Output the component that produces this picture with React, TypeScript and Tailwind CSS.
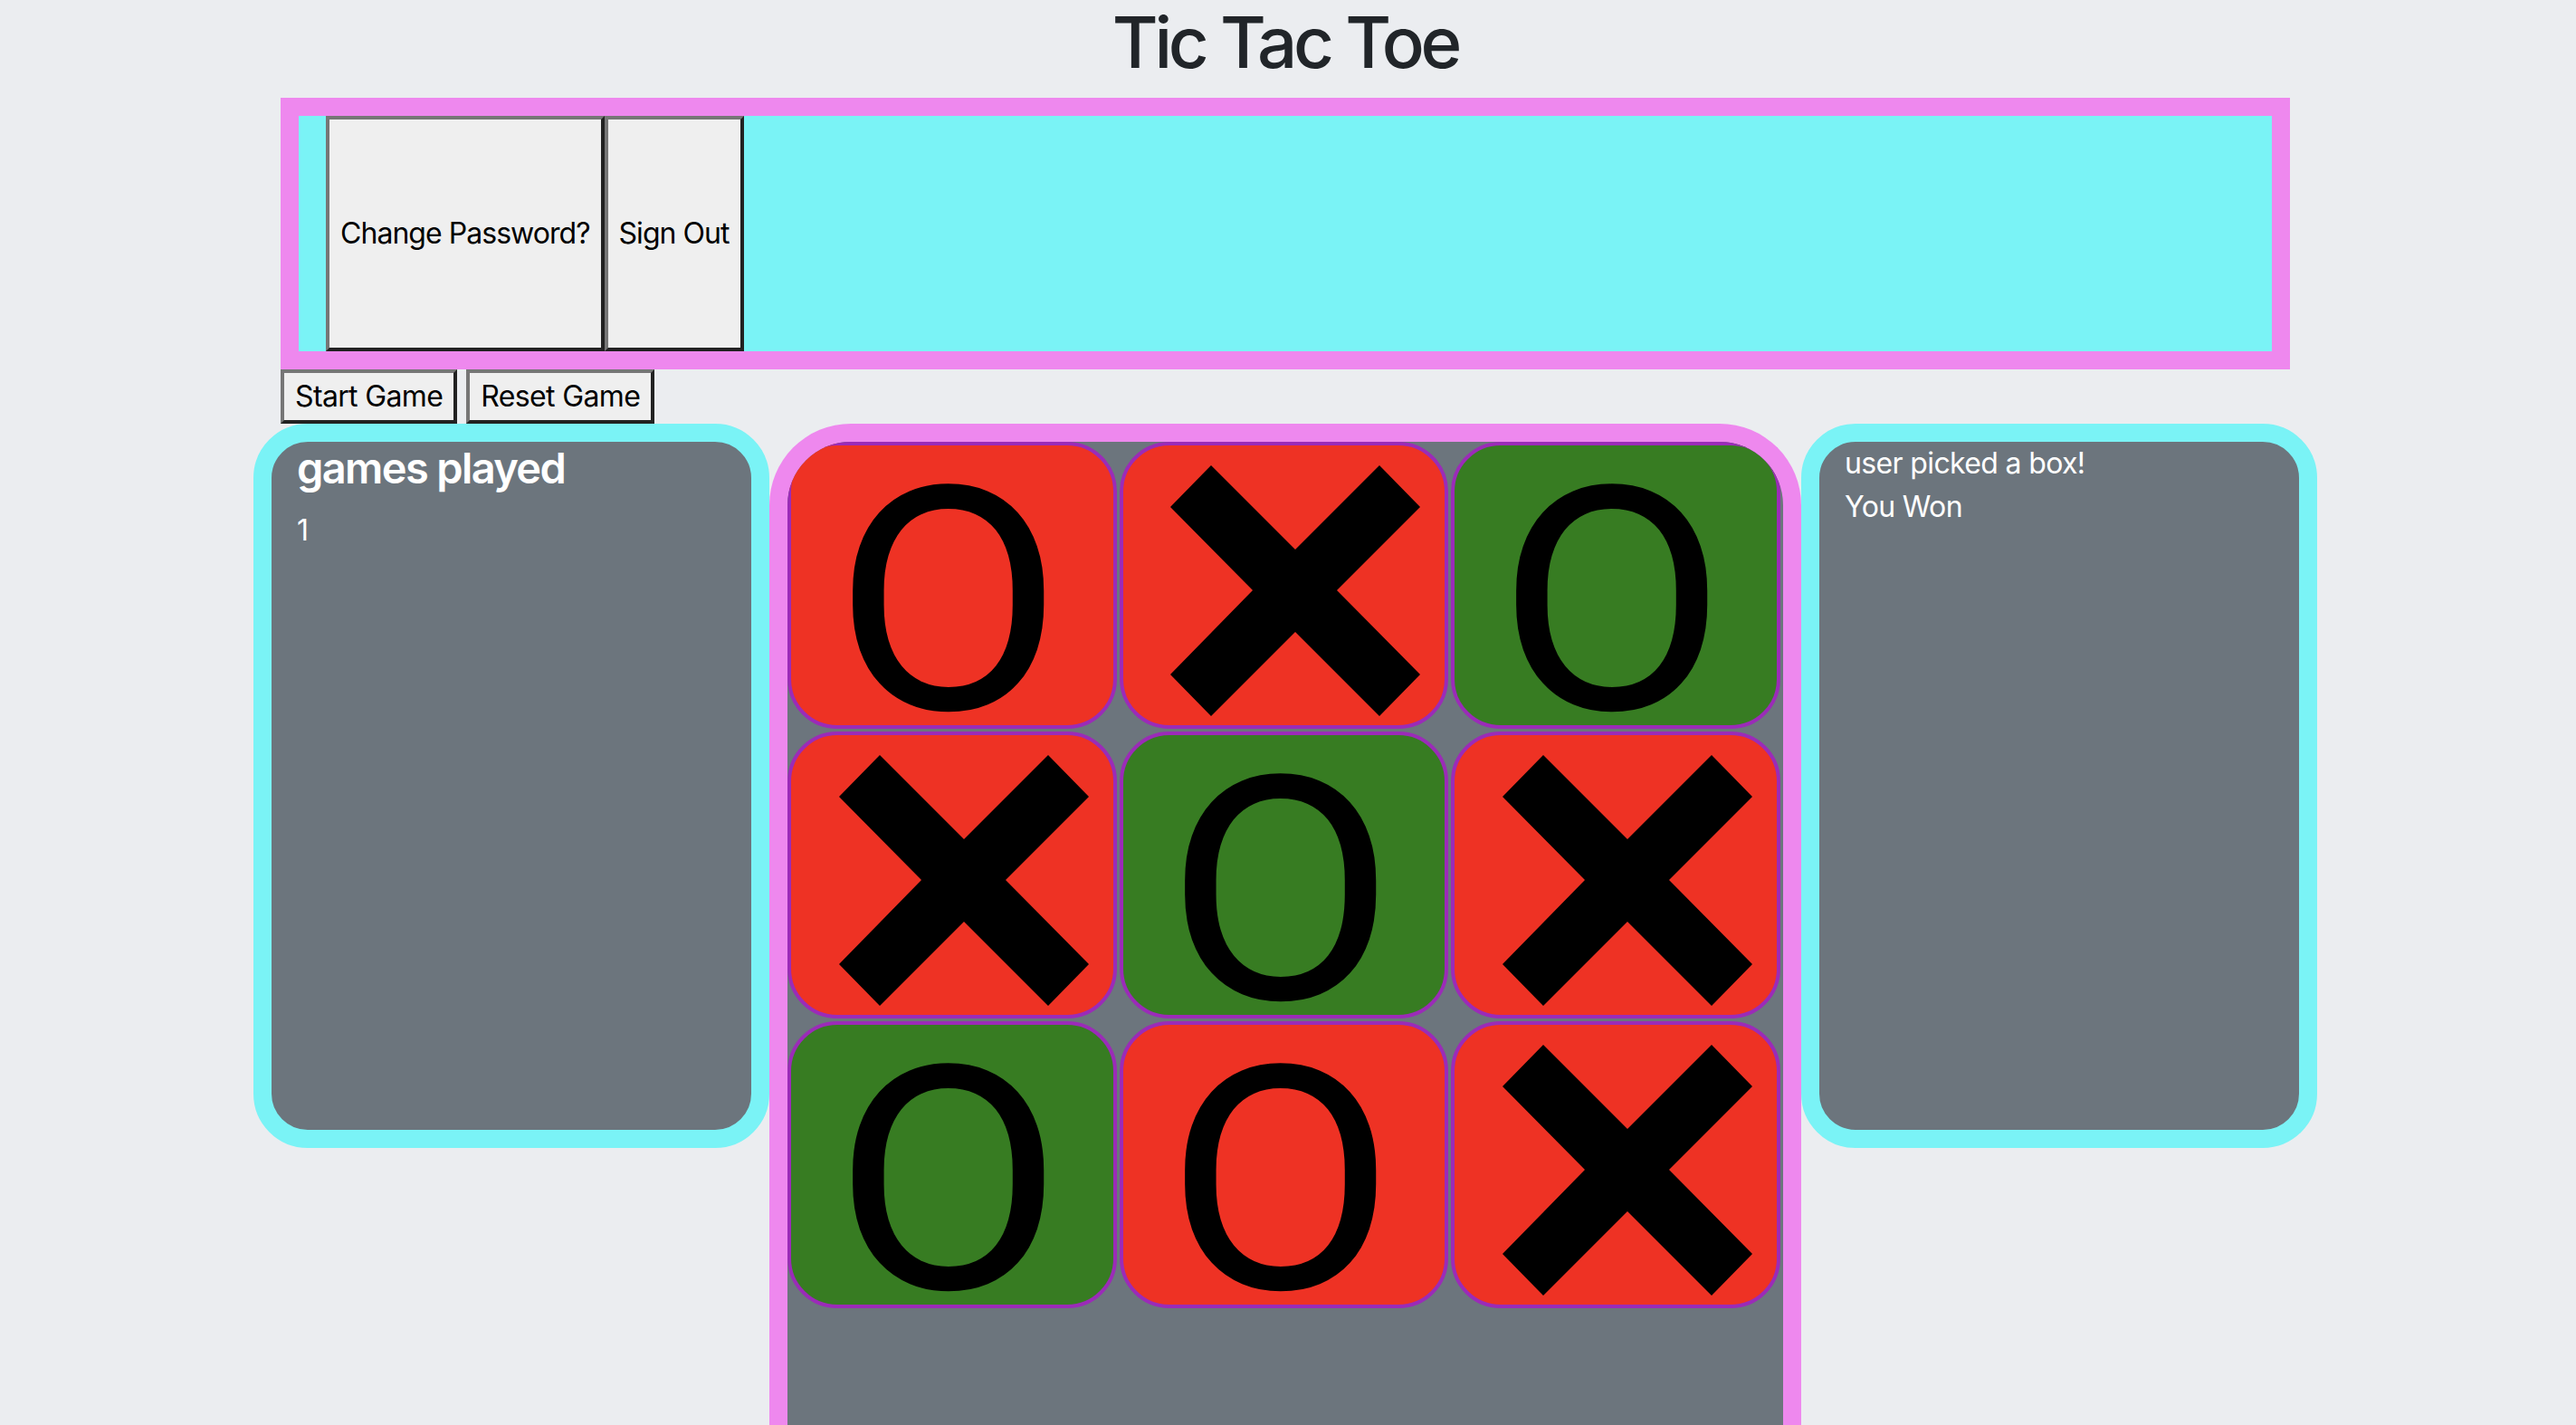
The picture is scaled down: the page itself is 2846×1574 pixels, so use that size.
import React from 'react';

type Mark = 'X' | 'O';
type Cell = { mark: Mark; win: boolean };

const board: Cell[] = [
  { mark: 'O', win: false },
  { mark: 'X', win: false },
  { mark: 'O', win: true },
  { mark: 'X', win: false },
  { mark: 'O', win: true },
  { mark: 'X', win: false },
  { mark: 'O', win: true },
  { mark: 'O', win: false },
  { mark: 'X', win: false },
];

function Cross() {
  // heavy multiplication x, like the ✖ glyph
  return (
    <svg width="276" height="277" viewBox="0 0 276 277" className="translate-x-[13px] translate-y-[6px]">
      <polygon
        fill="#000"
        points="45,0 138,93 231,0 276,46 184,138 276,231 231,277 138,184 45,277 0,231 91,138 0,46"
      />
    </svg>
  );
}

function Square({ cell }: { cell: Cell }) {
  return (
    <div
      className={`h-[317px] rounded-[55px] border-[4px] border-[#9b2bb8] flex items-center justify-center ${
        cell.win ? 'bg-[#377c22]' : 'bg-[#ee3224]'
      }`}
    >
      {cell.mark === 'X' ? (
        <Cross />
      ) : (
        <span
          className="block text-[345px] leading-[300px] text-black translate-x-[-4px] translate-y-[18px] scale-x-[1.07]"
          style={{ fontFamily: 'Roboto, sans-serif' }}
        >
          O
        </span>
      )}
    </div>
  );
}

function SysButton({ children, className = '' }: { children: React.ReactNode; className?: string }) {
  return (
    <button
      className={`bg-[#efefef] text-black text-[32px] leading-[48px] px-[12px] border-[4px] border-t-[#767676] border-l-[#767676] border-b-[#222222] border-r-[#222222] ${className}`}
    >
      {children}
    </button>
  );
}

export default function App() {
  return (
    <div
      className="h-screen w-full overflow-hidden bg-[#ebedf0]"
      style={{ fontFamily: 'Inter, "Open Sans", sans-serif' }}
    >
      <div className="w-[2280px] ml-[280px] flex flex-col">
        <div className="h-[108px]">
          <h1 className="text-center text-[78px] leading-[94px] font-medium text-[#212529] tracking-[-0.055em]">
            Tic Tac Toe
          </h1>
        </div>

        {/* account bar */}
        <div className="mx-[30px] h-[300px] border-[20px] border-[#ee88ee] bg-[#7af3f6] pl-[30px] flex">
          <SysButton className="h-full tracking-[-0.03em]">Change Password?</SysButton>
          <SysButton className="h-full tracking-[-0.03em]">Sign Out</SysButton>
        </div>

        <div className="mx-[30px] flex gap-[10px] h-[60px]">
          <SysButton className="tracking-[-0.02em]">Start Game</SysButton>
          <SysButton className="tracking-[-0.02em]">Reset Game</SysButton>
        </div>

        <div className="flex items-start">
          <div className="w-[570px] h-[800px] rounded-[60px] border-[20px] border-[#7af3f6] bg-[#6c757d] pl-[28px] text-white">
            <h4 className="text-[47px] leading-[58px] font-semibold tracking-[-0.035em] mb-[16px]">games played</h4>
            <p className="text-[32px] leading-[48px]">1</p>
          </div>

          <div className="w-[1140px] h-[1300px] rounded-t-[90px] border-[20px] border-b-0 border-[#ee88ee] bg-[#6c757d] overflow-hidden">
            <div className="grid grid-cols-3 gap-[3px] pr-[3px]">
              {board.map((cell, i) => (
                <Square key={i} cell={cell} />
              ))}
            </div>
          </div>

          <div className="w-[570px] h-[800px] rounded-[60px] border-[20px] border-[#7af3f6] bg-[#6c757d] pl-[28px] text-white text-[32px] leading-[48px] tracking-[-0.02em]">
            <p>user picked a box!</p>
            <p>You Won</p>
          </div>
        </div>
      </div>
    </div>
  );
}
